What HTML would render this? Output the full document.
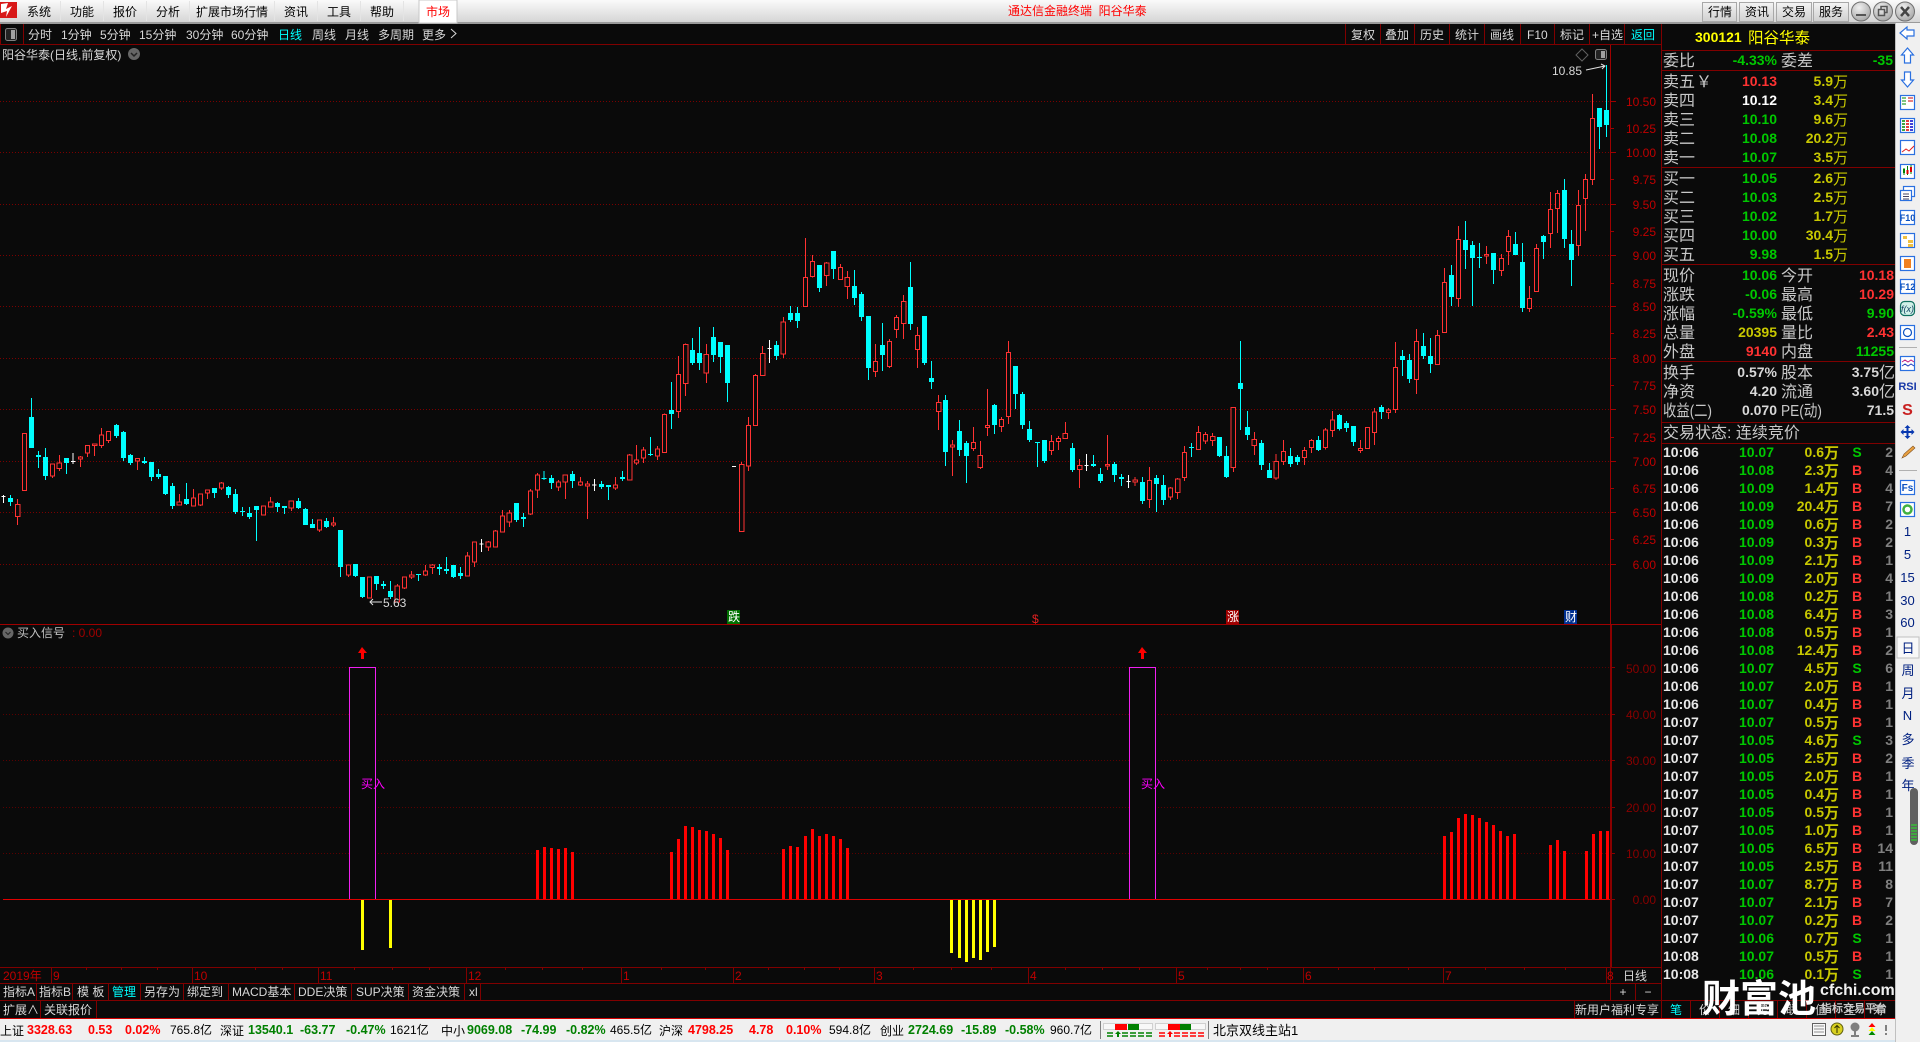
<!DOCTYPE html>
<html><head><meta charset="utf-8"><title>阳谷华泰</title>
<style>
html,body{margin:0;padding:0;background:#0a0a0a;overflow:hidden;width:1920px;height:1042px}
svg{display:block;position:absolute;left:0;top:0}
text{font-family:"Liberation Sans","WenQuanYi Zen Hei","Noto Sans CJK SC",sans-serif;font-size:12px;white-space:pre}
.c{font-size:12px;fill:#d8d8d8}
.b{font-size:12px;fill:#000}
.l{font-size:16px;fill:#c8c8c8}
.n{font-size:14px;font-weight:bold}
.p{font-size:12px;fill:#c00000;text-anchor:end}
.q{font-size:12px;fill:#8a0000;text-anchor:end}
.g{fill:#00c800}.r{fill:#ff3232}.y{fill:#c8c800}.w{fill:#e8e8e8}.s{fill:#808080}
.e{text-anchor:end}.m{text-anchor:middle}
.w2{font-size:15px;fill:#c8c800}
.rb{font-size:12.5px;font-weight:bold;fill:#f00}.gb{font-size:12.5px;font-weight:bold;fill:#008000}
.i{font-size:13px;fill:#002080;text-anchor:middle}
.cd{shape-rendering:crispEdges;fill:none}
.cd path{vector-effect:non-scaling-stroke}
</style></head><body>
<svg width="1920" height="1042" viewBox="0 0 1920 1042">
<defs>
<linearGradient id="tb" x1="0" y1="0" x2="0" y2="1"><stop offset="0" stop-color="#fafafa"/><stop offset="1" stop-color="#d4d4d4"/></linearGradient>
<linearGradient id="bt" x1="0" y1="0" x2="0" y2="1"><stop offset="0" stop-color="#f4f4f4"/><stop offset="1" stop-color="#cfcfcf"/></linearGradient>
<radialGradient id="ci" cx=".4" cy=".3" r=".8"><stop offset="0" stop-color="#f0f0f0"/><stop offset="1" stop-color="#a0a0a0"/></radialGradient>
</defs>
<rect width="1920" height="1042" fill="#0a0a0a"/>

<!-- top menu bar -->
<rect x="0" y="0" width="1920" height="23" fill="url(#tb)"/>
<rect x="0" y="22" width="1920" height="2" fill="#9a9a9a"/>
<path d="M60.500 1V21M103.500 1V21M146.500 1V21M189.500 1V21M274.500 1V21M317.500 1V21M360.500 1V21M403.500 1V21" stroke="#e4e4e4" shape-rendering="crispEdges"/>
<rect x="0" y="2" width="17" height="16" fill="#d81818"/>
<path d="M1 4L8 3L6 9L12 6L6 17L7 11L1 13Z" fill="#fff"/>
<g class="tm">
<text x="27" y="16" class="b">系统</text><text x="70" y="16" class="b">功能</text><text x="113" y="16" class="b">报价</text><text x="156" y="16" class="b">分析</text><text x="196" y="16" class="b">扩展市场行情</text><text x="284" y="16" class="b">资讯</text><text x="327" y="16" class="b">工具</text><text x="370" y="16" class="b">帮助</text>
</g>
<rect x="419" y="0" width="38" height="23" fill="#fff" stroke="#c8c8c8"/>
<text x="426" y="16" style="fill:#f00">市场</text>
<text x="1008" y="15" style="fill:#f00">通达信金融终端  阳谷华泰</text>
<g fill="url(#bt)" stroke="#a8a8a8"><rect x="1702.500" y="2.500" width="34" height="19"/><rect x="1739.500" y="2.500" width="34" height="19"/><rect x="1776.500" y="2.500" width="35" height="19"/><rect x="1813.500" y="2.500" width="35" height="19"/></g>
<text x="1708" y="16" class="b">行情</text><text x="1745" y="16" class="b">资讯</text><text x="1782" y="16" class="b">交易</text><text x="1819" y="16" class="b">服务</text>
<g fill="url(#ci)" stroke="#707070"><circle cx="1861" cy="11.500" r="9.500"/><circle cx="1883" cy="11.500" r="9.500"/><circle cx="1905" cy="11.500" r="9.500"/></g>
<path d="M1856 15h10" stroke="#555" stroke-width="2"/>
<path d="M1878.500 9.500h6v6h-6zM1881 9.500v-3h6v6h-2" stroke="#555" fill="none" stroke-width="1.500"/>
<path d="M1901 7l8 9M1909 7l-8 9" stroke="#444" stroke-width="2.500"/>

<!-- toolbar -->
<g stroke="#800000" fill="none" shape-rendering="crispEdges">
<path d="M0 44.500H1662M0.500 24V44M23.500 24V44"/>
<path d="M1345.500 24V44M1380.500 24V44M1414.500 24V44M1449.500 24V44M1484.500 24V44M1520.500 24V44M1554.500 24V44M1589.500 24V44M1624.500 24V44M1661.500 24V1018" />
</g>
<rect x="5.500" y="28.500" width="11" height="12" rx="2" fill="#222" stroke="#808080"/><rect x="11" y="30" width="4" height="9" fill="#a0a0a0"/>
<text x="28" y="39" class="c">分时</text><text x="61" y="39" class="c">1分钟</text><text x="100" y="39" class="c">5分钟</text><text x="139" y="39" class="c">15分钟</text><text x="186" y="39" class="c">30分钟</text><text x="231" y="39" class="c">60分钟</text>
<text x="278" y="39" style="fill:#0ff">日线</text><text x="312" y="39" class="c">周线</text><text x="345" y="39" class="c">月线</text><text x="378" y="39" class="c">多周期</text><text x="422" y="39" class="c">更多</text>
<path d="M451 35l5 4.500-5 4.500" transform="translate(0,-6)" stroke="#d8d8d8" fill="none"/>
<text x="1351" y="39" class="c">复权</text><text x="1385" y="39" class="c">叠加</text><text x="1420" y="39" class="c">历史</text><text x="1455" y="39" class="c">统计</text><text x="1490" y="39" class="c">画线</text><text x="1527" y="39" class="c">F10</text><text x="1560" y="39" class="c">标记</text><text x="1592" y="39" class="c">+自选</text><text x="1631" y="39" style="fill:#0ff">返回</text>
<text x="2" y="59" class="c">阳谷华泰(日线,前复权)</text>
<circle cx="134" cy="54" r="6" fill="#666"/><path d="M131 53l3 3 3-3" stroke="#222" fill="none" stroke-width="1.500"/>

<!-- grid upper -->
<g stroke="#7a0000" stroke-dasharray="1 2" shape-rendering="crispEdges">
<path d="M0 101.500H1610M0 152.500H1610M0 204.500H1610M0 255.500H1610M0 306.500H1610M0 358.500H1610M0 409.500H1610M0 461.500H1610M0 512.500H1610M0 564.500H1610"/>
</g>
<g stroke="#a00000" shape-rendering="crispEdges">
<path d="M1610.500 45V625" />
<path d="M1610 101.500h6M1610 128.500h4M1610 152.500h6M1610 179.500h4M1610 204.500h6M1610 231.500h4M1610 255.500h6M1610 283.500h4M1610 306.500h6M1610 333.500h4M1610 358.500h6M1610 385.500h4M1610 409.500h6M1610 437.500h4M1610 461.500h6M1610 488.500h4M1610 512.500h6M1610 539.500h4M1610 564.500h6"/>
</g>
<text x="1656" y="106" class="p">10.50</text><text x="1656" y="133" class="p">10.25</text><text x="1656" y="157" class="p">10.00</text><text x="1656" y="184" class="p">9.75</text><text x="1656" y="209" class="p">9.50</text><text x="1656" y="236" class="p">9.25</text><text x="1656" y="260" class="p">9.00</text><text x="1656" y="288" class="p">8.75</text><text x="1656" y="311" class="p">8.50</text><text x="1656" y="338" class="p">8.25</text><text x="1656" y="363" class="p">8.00</text><text x="1656" y="390" class="p">7.75</text><text x="1656" y="414" class="p">7.50</text><text x="1656" y="442" class="p">7.25</text><text x="1656" y="466" class="p">7.00</text><text x="1656" y="493" class="p">6.75</text><text x="1656" y="517" class="p">6.50</text><text x="1656" y="544" class="p">6.25</text><text x="1656" y="569" class="p">6.00</text>

<!-- candles left -->
<g class="cd" transform="translate(0,400) scale(.42092,.33333)">
<path stroke="#0ff" stroke-width="1" d="M25,285V318M75,-6V144M91,153V204M108,144V240M158,174V222M277,72V114M293,93V183M310,162V195M343,171V192M360,186V243M376,207V237M393,228V285M410,249V327M443,249V315M510,264V294M543,258V294M560,267V342M576,321V348M593,321V357M609,318V423M659,306V336M676,318V342M709,294V327M726,324V375M742,357V384M776,354V384M809,390V531M845,492V531M861,531V594M895,528V570M911,543V567M928,543V597M994,522V543M1044,492V525M1061,471V522M1077,495V534M1094,501V537M1227,309V366M1244,339V381M1293,213V240M1310,225V267M1360,213V264M1429,243V267M1446,255V300M1479,213V243M1546,111V168"/>
<path stroke="#0ff" stroke-width="5" d="M25,294V306M75,51V144M91,165V171M108,171V228M158,174V189M277,75V108M293,96V174M310,165V189M343,183V189M360,186V231M376,222V231M393,228V282M410,258V318M443,297V312M510,264V279M543,261V285M560,282V336M576,333V336M593,339V351M609,318V330M659,309V321M676,318V324M709,303V324M726,327V375M742,372V384M776,363V381M809,390V501M845,492V528M861,531V591M895,528V552M911,552V558M928,573V591M994,522V525M1044,501V507M1061,507V513M1077,495V531M1094,519V528M1227,309V360M1244,351V357M1293,234V237M1310,234V249M1360,222V243M1429,252V261M1446,255V261M1479,231V237M1546,162V165"/>
<path stroke="#ff3232" stroke-width="1" d="M42,297V375M125,192V234M141,165V213M191,168V201M208,136V171M225,132V168M241,84V144M258,94V129M327,175V210M426,282V315M460,267V318M476,282V318M493,270V297M526,246V270M643,291V321M692,303V333M759,360V396M792,351V381M828,495V531M944,552V606M961,531V567M978,513V537M1011,495V528M1027,492V522M1111,456V528M1127,426V501M1160,423V453M1177,390V441M1194,330V396M1210,330V381M1260,267V345M1277,219V294M1327,240V273M1343,225V297M1379,231V258M1396,243V357M1462,231V270M1496,162V240M1512,135V195M1529,141V189M1562,138V180"/>
<path stroke="#ff3232" stroke-width="1" fill="#0a0a0a" d="M37,313h10V350h-10zM53,100h10V272h-10zM120,192h10V228h-10zM136,189h10V206h-10zM186,171h10V177h-10zM203,136h10V159h-10zM220,132h10V137h-10zM236,105h10V137h-10zM253,94h10V122h-10zM322,175h10V183h-10zM421,306h10V315h-10zM455,294h10V318h-10zM471,282h10V315h-10zM488,270h10V279h-10zM521,249h10V264h-10zM621,318h10V345h-10zM638,306h10V321h-10zM687,303h10V324h-10zM754,360h10V390h-10zM787,369h10V375h-10zM823,495h10V525h-10zM873,531h10V594h-10zM939,558h10V606h-10zM956,531h10V564h-10zM973,525h10V531h-10zM1006,513h10V525h-10zM1022,495h10V503h-10zM1106,468h10V528h-10zM1122,426h10V486h-10zM1155,426h10V441h-10zM1172,393h10V441h-10zM1189,348h10V396h-10zM1205,339h10V366h-10zM1255,273h10V342h-10zM1272,225h10V270h-10zM1322,246h10V261h-10zM1338,225h10V246h-10zM1374,246h10V255h-10zM1391,252h10V258h-10zM1457,255h10V264h-10zM1491,165h10V240h-10zM1507,180h10V189h-10zM1524,150h10V174h-10zM1557,147h10V168h-10z"/>
<path stroke="#fff" stroke-width="1" d="M8,285V309M3,289h10M174,159V192M169,184h10M1144,417V456M1139,432h10M1412,237V273M1407,255h10"/>
</g>
<!-- candles middle -->
<g class="cd" transform="translate(660,220) scale(.42092,.33333)">
<path stroke="#0ff" stroke-width="1" d="M27,486V627M77,354V435M94,321V450M127,321V426M144,366V459M160,375V546M277,363V420M310,258V306M327,261V324M379,135V216M412,93V177M462,150V255M479,216V303M495,288V480M529,309V453M595,126V330M628,288V435M645,423V507M678,525V738M711,600V708M728,663V789M795,552V642M845,438V567M861,516V627M878,603V666M897,666V741M913,660V729M980,669V756M1030,705V741M1046,744V789M1080,726V786M1096,762V798M1146,771V852M1180,765V876M1196,765V855M1263,669V711M1329,651V711M1346,678V774M1379,363V630M1396,573V660M1429,660V750M1448,729V774M1498,684V741M1514,705V735M1565,648V693"/>
<path stroke="#0ff" stroke-width="5" d="M27,570V582M77,390V429M94,399V429M127,351V405M144,366V411M160,375V489M277,375V408M310,279V300M327,279V303M379,135V204M412,93V147M462,198V234M479,222V291M495,288V444M529,375V405M595,201V312M628,288V429M645,474V486M678,540V696M711,633V690M728,669V708M795,555V615M845,438V522M861,522V615M878,627V660M897,666V669M913,660V723M980,684V750M1030,732V738M1046,762V783M1080,732V765M1096,771V777M1146,786V843M1180,774V792M1196,795V840M1263,681V684M1329,651V708M1346,708V771M1379,489V507M1396,621V645M1429,669V735M1448,750V774M1498,708V732M1514,711V726M1565,660V690"/>
<path stroke="#ff3232" stroke-width="1" d="M11,580V698M44,408V594M61,370V528M110,372V489M194,726V934M210,591V753M227,462V617M244,378V467M293,291V414M346,54V260M362,105V173M396,126V198M429,132V179M445,153V237M512,372V471M545,357V444M562,285V354M579,225V357M612,321V444M662,525V630M695,660V768M745,621V693M761,663V747M778,507V648M811,591V636M828,363V612M930,645V705M947,648V690M963,606V656M997,717V804M1063,645V750M1129,771V798M1163,741V864M1213,801V840M1230,774V837M1246,678V783M1279,618V689M1296,636V672M1313,639V678M1362,562V756M1412,636V705M1464,702V780M1481,660V735M1531,681V735M1548,657V699"/>
<path stroke="#ff3232" stroke-width="1" fill="#0a0a0a" d="M6,583h10V698h-10zM39,463h10V575h-10zM56,373h10V491h-10zM105,403h10V459h-10zM189,733h10V934h-10zM205,616h10V738h-10zM222,466h10V617h-10zM239,400h10V467h-10zM288,306h10V402h-10zM341,172h10V260h-10zM357,124h10V170h-10zM391,129h10V166h-10zM424,142h10V179h-10zM440,172h10V200h-10zM507,424h10V455h-10zM540,364h10V440h-10zM557,292h10V329h-10zM574,244h10V311h-10zM607,346h10V389h-10zM657,547h10V575h-10zM690,675h10V681h-10zM740,667h10V686h-10zM756,706h10V743h-10zM773,616h10V623h-10zM806,598h10V620h-10zM823,397h10V590h-10zM925,664h10V692h-10zM942,655h10V665h-10zM958,640h10V656h-10zM992,736h10V749h-10zM1058,733h10V738h-10zM1124,780h10V786h-10zM1158,781h10V839h-10zM1208,804h10V831h-10zM1225,777h10V818h-10zM1241,697h10V773h-10zM1274,637h10V689h-10zM1291,643h10V663h-10zM1308,649h10V662h-10zM1357,562h10V743h-10zM1407,658h10V677h-10zM1459,724h10V774h-10zM1476,694h10V725h-10zM1526,691h10V713h-10zM1543,661h10V683h-10z"/>
<path stroke="#fff" stroke-width="1" d="M171,739h10M260,360V429M255,385h10M1013,702V753M1008,736h10M1113,765V804M1108,784h10"/>
</g>
<!-- candles right -->
<g class="cd" transform="translate(1320,40) scale(.33333)">
<path stroke="#0ff" stroke-width="1" d="M58,1122V1172M79,1143V1176M100,1158V1218M184,1095V1137M247,930V1008M268,942V1029M310,879V957M331,894V999M394,675V798M436,543V687M457,603V798M478,609V684M520,639V732M586,576V645M607,609V816M670,585V657M733,417V624M754,570V738M838,204V327M859,75V291"/>
<path stroke="#0ff" stroke-width="5" d="M58,1125V1167M79,1149V1164M100,1158V1206M184,1101V1116M247,948V960M268,960V1017M310,918V948M331,948V972M394,705V771M436,600V630M457,615V654M478,651V654M520,639V690M586,612V645M607,666V804M670,588V606M733,450V597M754,612V660M838,204V261M859,210V255"/>
<path stroke="#ff3232" stroke-width="1" d="M16,1164V1228M37,1113V1191M121,1200V1239M163,1104V1215M205,1104V1137M226,906V1119M289,867V1062M352,870V974M373,684V878M415,558V801M499,618V672M544,642V708M565,570V675M628,738V816M649,612V755M691,456V624M712,450V579M775,450V648M796,402V573M817,162V435"/>
<path stroke="#ff3232" stroke-width="1" fill="#0a0a0a" d="M10,1170h12V1223h-12zM31,1140h12V1172h-12zM115,1225h12V1232h-12zM136,1162h12V1226h-12zM157,1116h12V1178h-12zM199,1110h12V1118h-12zM220,982h12V1109h-12zM283,904h12V1019h-12zM346,886h12V974h-12zM367,727h12V878h-12zM409,598h12V776h-12zM493,643h12V648h-12zM538,655h12V692h-12zM559,589h12V635h-12zM622,775h12V806h-12zM643,625h12V755h-12zM685,508h12V581h-12zM706,460h12V506h-12zM769,496h12V617h-12zM790,418h12V476h-12zM811,235h12V418h-12z"/>
</g>
<!-- chart annotations -->
<path d="M1582 49l6 6-6 6-6-6z" fill="none" stroke="#606060"/>
<rect x="1595.500" y="49.500" width="11" height="10" rx="2" fill="#222" stroke="#808080"/><rect x="1601" y="51" width="4" height="7" fill="#a0a0a0"/>
<text x="1552" y="75" style="fill:#d8d8d8">10.85</text>
<path d="M1586 70L1605 66M1601 64l4 2-3 3" stroke="#e0e0e0" fill="none"/>
<path d="M382 602H370M373 599l-3 3 3 3" stroke="#e0e0e0" fill="none"/>
<text x="383" y="607" style="fill:#d8d8d8">5.63</text>
<!-- signals -->
<rect x="727" y="610" width="13" height="14" fill="#007000"/><text x="728" y="621" style="fill:#fff">跌</text>
<text x="1032" y="623" style="fill:#e02020">$</text>
<rect x="1226" y="610" width="13" height="14" fill="#a00000"/><text x="1227" y="621" style="fill:#fff">涨</text>
<rect x="1564" y="610" width="13" height="14" fill="#003090"/><text x="1565" y="621" style="fill:#fff">财</text>

<!-- divider & indicator panel -->
<rect x="0" y="624" width="1661" height="1" fill="#a00000"/>
<circle cx="8" cy="633" r="5.500" fill="#666"/><path d="M5.500 632l2.500 2.500 2.500-2.500" stroke="#222" fill="none"/>
<text x="17" y="637" class="c" style="fill:#c0c0c0">买入信号</text><text x="72" y="637" style="fill:#a00000">: 0.00</text>
<g stroke="#5a0000" stroke-dasharray="1 2" shape-rendering="crispEdges"><path d="M3 667.500H1610M3 714.500H1610M3 760.500H1610M3 807.500H1610M3 853.500H1610"/></g>
<rect x="1610" y="625" width="2" height="342" fill="#8a0000"/>
<g stroke="#8a0000" shape-rendering="crispEdges"><path d="M1610 667.500h5M1610 714.500h5M1610 760.500h5M1610 807.500h5M1610 853.500h5M1610 899.500h5"/></g>
<text x="1656" y="673" class="q">50.00</text><text x="1656" y="719" class="q">40.00</text><text x="1656" y="765" class="q">30.00</text><text x="1656" y="812" class="q">20.00</text><text x="1656" y="858" class="q">10.00</text><text x="1656" y="904" class="q">0.00</text>
<rect x="349.500" y="667.500" width="26" height="232" fill="#0a0a0a" stroke="#f020f0"/>
<rect x="1129.500" y="667.500" width="26" height="232" fill="#0a0a0a" stroke="#f020f0"/>
<text x="361" y="788" style="fill:#ff00ff">买入</text><text x="1141" y="788" style="fill:#ff00ff">买入</text>
<path d="M362 647l5 6h-3v6h-3v-6h-3z" fill="#f00"/><path d="M1142 647l5 6h-3v6h-3v-6h-3z" fill="#f00"/>
<rect x="3" y="899" width="1607" height="1" fill="#e00000"/>
<g stroke="#f00" stroke-width="3" shape-rendering="crispEdges">
<path d="M537.500 899V850M544.500 899V847M551.500 899V848M558.500 899V849M565.500 899V848M572.500 899V852"/>
<path d="M671.500 899V852M678.500 899V839M685.500 899V826M692.500 899V827M699.500 899V830M706.500 899V831M713.500 899V834M720.500 899V838M727.500 899V850"/>
<path d="M783.500 899V849M790.500 899V846M797.500 899V847M805.500 899V836M812.500 899V829M819.500 899V836M826.500 899V834M833.500 899V836M840.500 899V839M847.500 899V848"/>
<path d="M1444.500 899V836M1451.500 899V832M1458.500 899V818M1465.500 899V814M1472.500 899V815M1479.500 899V818M1486.500 899V822M1493.500 899V825M1500.500 899V831M1507.500 899V836M1514.500 899V834"/>
<path d="M1550.500 899V845M1557.500 899V840M1564.500 899V851M1586.500 899V851M1593.500 899V834M1600.500 899V831M1607.500 899V831"/>
</g>
<g stroke="#ff0" stroke-width="3" shape-rendering="crispEdges">
<path d="M362.500 900V950M390.500 900V948M951.500 900V953M959.500 900V958M966.500 900V962M973.500 900V958M980.500 900V960M987.500 900V952M994.500 900V947"/>
</g>

<!-- time axis -->
<g stroke="#800000" shape-rendering="crispEdges" fill="none">
<path d="M0 967.500H1662M0 983.500H1662M0 1000.500H1662"/>
<path d="M51.500 967V983M192.500 967V983M318.500 967V983M466.500 967V983M621.500 967V983M733.500 967V983M874.500 967V983M1028.500 967V983M1176.500 967V983M1303.500 967V983M1443.500 967V983M1606.500 967V983M1610.500 967V1000"/>
<path d="M86.500 967v3M121.500 967v3M157.500 967v3M255.500 967v3M282.500 967v3M354.500 967v3M392.500 967v3M429.500 967v3M505.500 967v3M542.500 967v3M582.500 967v3M661.500 967v3M705.500 967v3M768.500 967v3M804.500 967v3M839.500 967v3M913.500 967v3M951.500 967v3M991.500 967v3M1065.500 967v3M1102.500 967v3M1139.500 967v3M1207.500 967v3M1240.500 967v3M1267.500 967v3M1338.500 967v3M1374.500 967v3M1408.500 967v3M1485.500 967v3M1524.500 967v3M1565.500 967v3"/>
<path d="M1635.500 983V1000"/>
<path d="M36.500 983V1000M72.500 983V1000M108.500 983V1000M140.500 983V1000M183.500 983V1000M228.500 983V1000M294.500 983V1000M351.500 983V1000M408.500 983V1000M464.500 983V1000M480.500 983V1000"/>
<path d="M40.500 1000V1018M96.500 1000V1018M1574.500 1000V1018"/>
</g>
<text x="3" y="980" style="fill:#c00000">2019年</text><text x="53" y="980" style="fill:#c00000">9</text><text x="194" y="980" style="fill:#c00000">10</text><text x="320" y="980" style="fill:#c00000">11</text><text x="468" y="980" style="fill:#c00000">12</text><text x="623" y="980" style="fill:#c00000">1</text><text x="735" y="980" style="fill:#c00000">2</text><text x="876" y="980" style="fill:#c00000">3</text><text x="1030" y="980" style="fill:#c00000">4</text><text x="1178" y="980" style="fill:#c00000">5</text><text x="1305" y="980" style="fill:#c00000">6</text><text x="1445" y="980" style="fill:#c00000">7</text><text x="1607" y="980" style="fill:#c00000">8</text>
<text x="1623" y="980" class="c">日线</text>
<text x="1623" y="996" class="c m">+</text><text x="1648" y="996" class="c m">−</text>
<text x="3" y="996" class="c">指标A</text><text x="39" y="996" class="c">指标B</text><text x="77" y="996" class="c">模 板</text><text x="112" y="996" style="fill:#0ff">管理</text><text x="144" y="996" class="c">另存为</text><text x="187" y="996" class="c">绑定到</text><text x="232" y="996" class="c">MACD基本</text><text x="298" y="996" class="c">DDE决策</text><text x="356" y="996" class="c">SUP决策</text><text x="412" y="996" class="c">资金决策</text><text x="469" y="996" class="c">xl</text>
<text x="3" y="1014" class="c">扩展∧</text><text x="44" y="1014" class="c">关联报价</text>
<text x="1575" y="1014" class="c">新用户福利专享</text>

<!-- right panel -->
<rect x="1662" y="24" width="233" height="994" fill="#0a0a0a"/>
<g stroke="#800000" shape-rendering="crispEdges">
<path d="M1661.500 24V1018"/>
<path d="M1662 50.500H1895M1662 70.500H1895M1662 167.500H1895M1662 264.500H1895M1662 361.500H1895M1662 422.500H1895M1662 443.500H1895"/>
<path d="M1662 1000.500H1895M1690.500 1000V1018M1719.500 1000V1018M1748.500 1000V1018M1777.500 1000V1018M1806.500 1000V1018M1835.500 1000V1018M1864.500 1000V1018"/>
</g>
<text x="1670" y="1014" style="fill:#0ff">笔</text><text x="1699" y="1014" class="c">价</text><text x="1728" y="1014" class="c">细</text><text x="1757" y="1014" class="c">势</text><text x="1786" y="1014" class="c">联</text><text x="1815" y="1014" class="c">值</text><text x="1844" y="1014" class="c">主</text><text x="1873" y="1014" class="c">筹</text>
<text x="1695" y="42" style="font-size:14px;font-weight:bold;fill:#ff0">300121</text>
<text x="1748" y="43" style="font-size:15.500px;fill:#ff0">阳谷华泰</text>
<text x="1663" y="66" class="l">委比</text><text x="1777" y="65" class="n g e">-4.33%</text><text x="1781" y="66" class="l">委差</text><text x="1893" y="65" class="n g e">-35</text>

<text x="1663" y="87" class="l">卖五</text><text x="1696" y="87" class="l">￥</text><text x="1777" y="86" class="n r e">10.13</text><text x="1833" y="86" class="n y e">5.9</text><text x="1833" y="87" class="w2">万</text>
<text x="1663" y="106" class="l">卖四</text><text x="1777" y="105" class="n e" style="fill:#fff">10.12</text><text x="1833" y="105" class="n y e">3.4</text><text x="1833" y="106" class="w2">万</text>
<text x="1663" y="125" class="l">卖三</text><text x="1777" y="124" class="n g e">10.10</text><text x="1833" y="124" class="n y e">9.6</text><text x="1833" y="125" class="w2">万</text>
<text x="1663" y="144" class="l">卖二</text><text x="1777" y="143" class="n g e">10.08</text><text x="1833" y="143" class="n y e">20.2</text><text x="1833" y="144" class="w2">万</text>
<text x="1663" y="163" class="l">卖一</text><text x="1777" y="162" class="n g e">10.07</text><text x="1833" y="162" class="n y e">3.5</text><text x="1833" y="163" class="w2">万</text>
<text x="1663" y="184" class="l">买一</text><text x="1777" y="183" class="n g e">10.05</text><text x="1833" y="183" class="n y e">2.6</text><text x="1833" y="184" class="w2">万</text>
<text x="1663" y="203" class="l">买二</text><text x="1777" y="202" class="n g e">10.03</text><text x="1833" y="202" class="n y e">2.5</text><text x="1833" y="203" class="w2">万</text>
<text x="1663" y="222" class="l">买三</text><text x="1777" y="221" class="n g e">10.02</text><text x="1833" y="221" class="n y e">1.7</text><text x="1833" y="222" class="w2">万</text>
<text x="1663" y="241" class="l">买四</text><text x="1777" y="240" class="n g e">10.00</text><text x="1833" y="240" class="n y e">30.4</text><text x="1833" y="241" class="w2">万</text>
<text x="1663" y="260" class="l">买五</text><text x="1777" y="259" class="n g e">9.98</text><text x="1833" y="259" class="n y e">1.5</text><text x="1833" y="260" class="w2">万</text>

<text x="1663" y="281" class="l">现价</text><text x="1777" y="280" class="n g e">10.06</text><text x="1781" y="281" class="l">今开</text><text x="1894" y="280" class="n r e">10.18</text>
<text x="1663" y="300" class="l">涨跌</text><text x="1777" y="299" class="n g e">-0.06</text><text x="1781" y="300" class="l">最高</text><text x="1894" y="299" class="n r e">10.29</text>
<text x="1663" y="319" class="l">涨幅</text><text x="1777" y="318" class="n g e">-0.59%</text><text x="1781" y="319" class="l">最低</text><text x="1894" y="318" class="n g e">9.90</text>
<text x="1663" y="338" class="l">总量</text><text x="1777" y="337" class="n y e">20395</text><text x="1781" y="338" class="l">量比</text><text x="1894" y="337" class="n r e">2.43</text>
<text x="1663" y="357" class="l">外盘</text><text x="1777" y="356" class="n r e">9140</text><text x="1781" y="357" class="l">内盘</text><text x="1894" y="356" class="n g e">11255</text>

<text x="1663" y="378" class="l">换手</text><text x="1777" y="377" class="n e" style="fill:#d8d8d8">0.57%</text><text x="1781" y="378" class="l">股本</text><text x="1879" y="377" class="n e" style="fill:#d8d8d8">3.75</text><text x="1879" y="378" class="l">亿</text>
<text x="1663" y="397" class="l">净资</text><text x="1777" y="396" class="n e" style="fill:#d8d8d8">4.20</text><text x="1781" y="397" class="l">流通</text><text x="1879" y="396" class="n e" style="fill:#d8d8d8">3.60</text><text x="1879" y="397" class="l">亿</text>
<text x="1663" y="416" class="l" textLength="49" lengthAdjust="spacingAndGlyphs">收益(二)</text><text x="1777" y="415" class="n e" style="fill:#d8d8d8">0.070</text><text x="1781" y="416" class="l" textLength="41" lengthAdjust="spacingAndGlyphs">PE(动)</text><text x="1894" y="415" class="n e" style="fill:#d8d8d8">71.5</text>
<text x="1663" y="438" class="l">交易状态: 连续竞价</text>

<!-- ticks -->
<g class="n">
<text x="1663" y="457" class="n w">10:06</text><text x="1774" y="457" class="n g e">10.07</text><text x="1824" y="457" class="n y e">0.6</text><text x="1824" y="458" class="w2">万</text><text x="1857" y="457" class="n g m">S</text><text x="1893" y="457" class="n s e">2</text>
<text x="1663" y="475" class="n w">10:06</text><text x="1774" y="475" class="n g e">10.08</text><text x="1824" y="475" class="n y e">2.3</text><text x="1824" y="476" class="w2">万</text><text x="1857" y="475" class="n r m">B</text><text x="1893" y="475" class="n s e">4</text>
<text x="1663" y="493" class="n w">10:06</text><text x="1774" y="493" class="n g e">10.09</text><text x="1824" y="493" class="n y e">1.4</text><text x="1824" y="494" class="w2">万</text><text x="1857" y="493" class="n r m">B</text><text x="1893" y="493" class="n s e">4</text>
<text x="1663" y="511" class="n w">10:06</text><text x="1774" y="511" class="n g e">10.09</text><text x="1824" y="511" class="n y e">20.4</text><text x="1824" y="512" class="w2">万</text><text x="1857" y="511" class="n r m">B</text><text x="1893" y="511" class="n s e">7</text>
<text x="1663" y="529" class="n w">10:06</text><text x="1774" y="529" class="n g e">10.09</text><text x="1824" y="529" class="n y e">0.6</text><text x="1824" y="530" class="w2">万</text><text x="1857" y="529" class="n r m">B</text><text x="1893" y="529" class="n s e">2</text>
<text x="1663" y="547" class="n w">10:06</text><text x="1774" y="547" class="n g e">10.09</text><text x="1824" y="547" class="n y e">0.3</text><text x="1824" y="548" class="w2">万</text><text x="1857" y="547" class="n r m">B</text><text x="1893" y="547" class="n s e">2</text>
<text x="1663" y="565" class="n w">10:06</text><text x="1774" y="565" class="n g e">10.09</text><text x="1824" y="565" class="n y e">2.1</text><text x="1824" y="566" class="w2">万</text><text x="1857" y="565" class="n r m">B</text><text x="1893" y="565" class="n s e">1</text>
<text x="1663" y="583" class="n w">10:06</text><text x="1774" y="583" class="n g e">10.09</text><text x="1824" y="583" class="n y e">2.0</text><text x="1824" y="584" class="w2">万</text><text x="1857" y="583" class="n r m">B</text><text x="1893" y="583" class="n s e">4</text>
<text x="1663" y="601" class="n w">10:06</text><text x="1774" y="601" class="n g e">10.08</text><text x="1824" y="601" class="n y e">0.2</text><text x="1824" y="602" class="w2">万</text><text x="1857" y="601" class="n r m">B</text><text x="1893" y="601" class="n s e">1</text>
<text x="1663" y="619" class="n w">10:06</text><text x="1774" y="619" class="n g e">10.08</text><text x="1824" y="619" class="n y e">6.4</text><text x="1824" y="620" class="w2">万</text><text x="1857" y="619" class="n r m">B</text><text x="1893" y="619" class="n s e">3</text>
<text x="1663" y="637" class="n w">10:06</text><text x="1774" y="637" class="n g e">10.08</text><text x="1824" y="637" class="n y e">0.5</text><text x="1824" y="638" class="w2">万</text><text x="1857" y="637" class="n r m">B</text><text x="1893" y="637" class="n s e">1</text>
<text x="1663" y="655" class="n w">10:06</text><text x="1774" y="655" class="n g e">10.08</text><text x="1824" y="655" class="n y e">12.4</text><text x="1824" y="656" class="w2">万</text><text x="1857" y="655" class="n r m">B</text><text x="1893" y="655" class="n s e">2</text>
<text x="1663" y="673" class="n w">10:06</text><text x="1774" y="673" class="n g e">10.07</text><text x="1824" y="673" class="n y e">4.5</text><text x="1824" y="674" class="w2">万</text><text x="1857" y="673" class="n g m">S</text><text x="1893" y="673" class="n s e">6</text>
<text x="1663" y="691" class="n w">10:06</text><text x="1774" y="691" class="n g e">10.07</text><text x="1824" y="691" class="n y e">2.0</text><text x="1824" y="692" class="w2">万</text><text x="1857" y="691" class="n r m">B</text><text x="1893" y="691" class="n s e">1</text>
<text x="1663" y="709" class="n w">10:06</text><text x="1774" y="709" class="n g e">10.07</text><text x="1824" y="709" class="n y e">0.4</text><text x="1824" y="710" class="w2">万</text><text x="1857" y="709" class="n r m">B</text><text x="1893" y="709" class="n s e">1</text>
<text x="1663" y="727" class="n w">10:07</text><text x="1774" y="727" class="n g e">10.07</text><text x="1824" y="727" class="n y e">0.5</text><text x="1824" y="728" class="w2">万</text><text x="1857" y="727" class="n r m">B</text><text x="1893" y="727" class="n s e">1</text>
<text x="1663" y="745" class="n w">10:07</text><text x="1774" y="745" class="n g e">10.05</text><text x="1824" y="745" class="n y e">4.6</text><text x="1824" y="746" class="w2">万</text><text x="1857" y="745" class="n g m">S</text><text x="1893" y="745" class="n s e">3</text>
<text x="1663" y="763" class="n w">10:07</text><text x="1774" y="763" class="n g e">10.05</text><text x="1824" y="763" class="n y e">2.5</text><text x="1824" y="764" class="w2">万</text><text x="1857" y="763" class="n r m">B</text><text x="1893" y="763" class="n s e">2</text>
<text x="1663" y="781" class="n w">10:07</text><text x="1774" y="781" class="n g e">10.05</text><text x="1824" y="781" class="n y e">2.0</text><text x="1824" y="782" class="w2">万</text><text x="1857" y="781" class="n r m">B</text><text x="1893" y="781" class="n s e">1</text>
<text x="1663" y="799" class="n w">10:07</text><text x="1774" y="799" class="n g e">10.05</text><text x="1824" y="799" class="n y e">0.4</text><text x="1824" y="800" class="w2">万</text><text x="1857" y="799" class="n r m">B</text><text x="1893" y="799" class="n s e">1</text>
<text x="1663" y="817" class="n w">10:07</text><text x="1774" y="817" class="n g e">10.05</text><text x="1824" y="817" class="n y e">0.5</text><text x="1824" y="818" class="w2">万</text><text x="1857" y="817" class="n r m">B</text><text x="1893" y="817" class="n s e">1</text>
<text x="1663" y="835" class="n w">10:07</text><text x="1774" y="835" class="n g e">10.05</text><text x="1824" y="835" class="n y e">1.0</text><text x="1824" y="836" class="w2">万</text><text x="1857" y="835" class="n r m">B</text><text x="1893" y="835" class="n s e">1</text>
<text x="1663" y="853" class="n w">10:07</text><text x="1774" y="853" class="n g e">10.05</text><text x="1824" y="853" class="n y e">6.5</text><text x="1824" y="854" class="w2">万</text><text x="1857" y="853" class="n r m">B</text><text x="1893" y="853" class="n s e">14</text>
<text x="1663" y="871" class="n w">10:07</text><text x="1774" y="871" class="n g e">10.05</text><text x="1824" y="871" class="n y e">2.5</text><text x="1824" y="872" class="w2">万</text><text x="1857" y="871" class="n r m">B</text><text x="1893" y="871" class="n s e">11</text>
<text x="1663" y="889" class="n w">10:07</text><text x="1774" y="889" class="n g e">10.07</text><text x="1824" y="889" class="n y e">8.7</text><text x="1824" y="890" class="w2">万</text><text x="1857" y="889" class="n r m">B</text><text x="1893" y="889" class="n s e">8</text>
<text x="1663" y="907" class="n w">10:07</text><text x="1774" y="907" class="n g e">10.07</text><text x="1824" y="907" class="n y e">2.1</text><text x="1824" y="908" class="w2">万</text><text x="1857" y="907" class="n r m">B</text><text x="1893" y="907" class="n s e">7</text>
<text x="1663" y="925" class="n w">10:07</text><text x="1774" y="925" class="n g e">10.07</text><text x="1824" y="925" class="n y e">0.2</text><text x="1824" y="926" class="w2">万</text><text x="1857" y="925" class="n r m">B</text><text x="1893" y="925" class="n s e">2</text>
<text x="1663" y="943" class="n w">10:07</text><text x="1774" y="943" class="n g e">10.06</text><text x="1824" y="943" class="n y e">0.7</text><text x="1824" y="944" class="w2">万</text><text x="1857" y="943" class="n g m">S</text><text x="1893" y="943" class="n s e">1</text>
<text x="1663" y="961" class="n w">10:08</text><text x="1774" y="961" class="n g e">10.07</text><text x="1824" y="961" class="n y e">0.5</text><text x="1824" y="962" class="w2">万</text><text x="1857" y="961" class="n r m">B</text><text x="1893" y="961" class="n s e">1</text>
<text x="1663" y="979" class="n w">10:08</text><text x="1774" y="979" class="n g e">10.06</text><text x="1824" y="979" class="n y e">0.1</text><text x="1824" y="980" class="w2">万</text><text x="1857" y="979" class="n g m">S</text><text x="1893" y="979" class="n s e">1</text>
</g>

<!-- watermark -->
<text x="1702" y="1012" style="font-size:38px;font-weight:bold;fill:#fff;font-family:'Noto Sans CJK SC',sans-serif">财富池</text>
<text x="1820" y="995" style="font-size:16px;font-weight:bold;fill:#f0f0f0">cfchi.com</text>
<text x="1821" y="1012" style="font-size:11px;font-weight:bold;fill:#c8c8c8">指标交易平台</text>

<!-- right icon bar -->
<rect x="1895" y="23" width="25" height="1019" fill="#f0f0f0"/>
<rect x="1895" y="23" width="1" height="1019" fill="#c0c0c0"/>
<g fill="#fff" stroke="#2a70e0" stroke-width="1.200">
<path d="M1900 33l7-6v3h7v6h-7v3z"/>
<path d="M1907.500 48l6 7h-3v8h-6v-8h-3z"/>
<path d="M1904.500 72h6v8h3l-6 7-6-7h3z"/>
<rect x="1900.500" y="95.500" width="14" height="14"/>
<rect x="1900.500" y="118.500" width="14" height="14"/>
<rect x="1900.500" y="140.500" width="14" height="14"/>
<rect x="1900.500" y="164.500" width="14" height="14"/>
<rect x="1903.500" y="186.500" width="11" height="10"/><rect x="1900.500" y="190.500" width="11" height="10"/>
<rect x="1900.500" y="210.500" width="14" height="14"/>
<rect x="1900.500" y="233.500" width="14" height="14"/>
<rect x="1900.500" y="256.500" width="14" height="14"/>
<rect x="1900.500" y="279.500" width="14" height="14"/>
<rect x="1900.500" y="325.500" width="14" height="14"/>
<rect x="1900.500" y="356.500" width="14" height="14"/>
<rect x="1900.500" y="480.500" width="14" height="14"/>
<rect x="1900.500" y="502.500" width="14" height="14"/>
</g>
<rect x="1900.500" y="301.500" width="14" height="14" rx="4" fill="#d0f0e8" stroke="#107060" stroke-width="1.200"/>
<path d="M1902 98h4M1902 101h4M1902 104h4" stroke="#080"/><path d="M1908 98h5M1908 101h5" stroke="#c00"/>
<path d="M1902 121h3M1902 124h3M1902 127h3M1902 130h3" stroke="#080" stroke-width="1.500"/><path d="M1906 121h3M1906 124h3M1906 127h3M1906 130h3" stroke="#d00" stroke-width="1.500"/><path d="M1910 121h3M1910 124h3M1910 127h3M1910 130h3" stroke="#00c" stroke-width="1.500"/>
<path d="M1902 152l4-3 3 2 5-5" stroke="#e02020" fill="none"/>
<path d="M1904 168v7M1907.500 166v9M1911 165v9" stroke="#008000"/><rect x="1903" y="169" width="2" height="4" fill="#008000"/><rect x="1906.500" y="170" width="2" height="4" fill="#d00"/><rect x="1910" y="167" width="2" height="5" fill="#d00"/>
<path d="M1903 194h6M1903 196.500h6M1903 199h6" stroke="#446"/>
<rect x="1903" y="236" width="4" height="3" fill="#f0c040"/><rect x="1908" y="240" width="5" height="3" fill="#f0c040"/><rect x="1908" y="244" width="5" height="3" fill="#f0c040"/>
<rect x="1904" y="259" width="7" height="9" fill="#f08020"/>
<text x="1907.500" y="221" class="i" style="font-size:9px;fill:#0a50c0;font-weight:bold">F10</text>
<text x="1907.500" y="290" class="i" style="font-size:9px;fill:#0a50c0;font-weight:bold">F12</text>
<text x="1907.500" y="312" class="i" style="font-size:9px;font-style:italic;fill:#104060">f(x)</text>
<circle cx="1907.500" cy="332.500" r="4" fill="none" stroke="#0a50c0" stroke-width="1.200"/>
<rect x="1899" y="347" width="18" height="1" fill="#b0b0b0"/>
<path d="M1902 362l3-2 3 2 3-2 3 2" stroke="#c02080" fill="none"/><path d="M1902 366l3-2 3 2 3-2 3 2" stroke="#2040c0" fill="none"/>
<text x="1907.500" y="390" class="i" style="font-size:11px;font-weight:bold;fill:#1838a8">RSI</text>
<text x="1907.500" y="415" class="i" style="font-size:16px;font-weight:bold;fill:#c82020">S</text>
<path d="M1907.500 425l3 3h-2v3h3v-2l3 3-3 3v-2h-3v3h2l-3 3-3-3h2v-3h-3v2l-3-3 3-3v2h3v-3h-2z" fill="#0838b0"/>
<path d="M1902 458l2-4 9-8 2 2-9 8z" fill="#e8a040" stroke="#805020" stroke-width=".6"/>
<rect x="1899" y="470" width="18" height="1" fill="#b0b0b0"/>
<text x="1907.500" y="491" class="i" style="font-size:10px;font-weight:bold;fill:#0a50c0">Fs</text>
<circle cx="1907.500" cy="509.500" r="4" fill="none" stroke="#40b040" stroke-width="2.500"/>
<rect x="1897" y="637" width="22" height="21" fill="#f8f8f8" stroke="#c0c0c0"/>
<text x="1907.500" y="536" class="i">1</text><text x="1907.500" y="559" class="i">5</text><text x="1907.500" y="582" class="i">15</text><text x="1907.500" y="605" class="i">30</text><text x="1907.500" y="627" class="i">60</text><text x="1908" y="653" class="i">日</text><text x="1908" y="675" class="i">周</text><text x="1908" y="698" class="i">月</text><text x="1907.500" y="720" class="i">N</text><text x="1908" y="744" class="i">多</text><text x="1908" y="768" class="i">季</text><text x="1908" y="790" class="i">年</text>
<rect x="1910" y="788" width="8" height="57" rx="4" fill="#606060"/>
<path d="M1911 825h6M1911 828h6M1911 831h6M1911 834h6M1911 837h6M1911 840h6" stroke="#30d030" stroke-width="1.200"/>

<!-- status bar -->
<rect x="0" y="1018" width="1895" height="1" fill="#d00000"/>
<rect x="0" y="1019" width="1895" height="21" fill="#f0f0f0"/>
<rect x="0" y="1040" width="1895" height="2" fill="#d8e6f0"/>
<text x="0" y="1035" style="font-size:12px;fill:#000">上证</text><text x="27" y="1034" class="rb">3328.63</text><text x="88" y="1034" class="rb">0.53</text><text x="125" y="1034" class="rb">0.02%</text><text x="170" y="1034" class="b">765.8亿</text>
<text x="220" y="1035" class="b">深证</text><text x="248" y="1034" class="gb">13540.1</text><text x="300" y="1034" class="gb">-63.77</text><text x="346" y="1034" class="gb">-0.47%</text><text x="390" y="1034" class="b">1621亿</text>
<text x="441" y="1035" class="b">中小</text><text x="467" y="1034" class="gb">9069.08</text><text x="521" y="1034" class="gb">-74.99</text><text x="566" y="1034" class="gb">-0.82%</text><text x="610" y="1034" class="b">465.5亿</text>
<text x="659" y="1035" class="b">沪深</text><text x="688" y="1034" class="rb">4798.25</text><text x="749" y="1034" class="rb">4.78</text><text x="786" y="1034" class="rb">0.10%</text><text x="829" y="1034" class="b">594.8亿</text>
<text x="880" y="1035" class="b">创业</text><text x="908" y="1034" class="gb">2724.69</text><text x="961" y="1034" class="gb">-15.89</text><text x="1005" y="1034" class="gb">-0.58%</text><text x="1050" y="1034" class="b">960.7亿</text>
<rect x="1100" y="1021" width="1" height="18" fill="#808080"/><rect x="1208" y="1021" width="1" height="18" fill="#808080"/>
<rect x="1103.500" y="1023.500" width="49" height="6" fill="#f8f8f8" stroke="#d0d0d0"/><rect x="1115" y="1024" width="12" height="6" fill="#f00"/><rect x="1128" y="1024" width="11" height="6" fill="#008000"/>
<rect x="1155.500" y="1023.500" width="50" height="6" fill="#f8f8f8" stroke="#d0d0d0"/><rect x="1168" y="1024" width="12" height="6" fill="#f00"/><rect x="1180" y="1024" width="11" height="6" fill="#008000"/>
<path d="M1107 1033h6M1107 1036h6M1122 1033h6M1122 1036h6M1130 1033h6M1130 1036h6M1138 1033h6M1138 1036h6M1146 1033h6M1146 1036h6" stroke="#008000" stroke-width="1.500"/><path d="M1118 1031l3 3h-2v3h-2v-3h-2z" fill="#008000"/>
<path d="M1159 1033h6M1159 1036h6M1174 1033h6M1174 1036h6M1182 1033h6M1182 1036h6M1190 1033h6M1190 1036h6M1198 1033h6M1198 1036h6" stroke="#f00" stroke-width="1.500"/><path d="M1170 1031l3 3h-2v3h-2v-3h-2z" fill="#f00"/>
<text x="1213" y="1035" style="font-size:13px;fill:#000">北京双线主站1</text>
<rect x="1812.500" y="1023.500" width="13" height="12" fill="#f8f8f8" stroke="#606060"/><path d="M1814 1026h10M1814 1029h10M1814 1032h10" stroke="#909090"/>
<circle cx="1837" cy="1029" r="6" fill="#d8d020" stroke="#606010"/><path d="M1837 1033v-7M1834.500 1028l2.500-2.500 2.500 2.500" stroke="#303000" fill="none"/>
<circle cx="1855" cy="1027" r="4.500" fill="#808080"/><path d="M1855 1030v5M1851 1036h8" stroke="#808080" stroke-width="2"/>
<path d="M1872 1023l3.500 4h-7z" fill="#f00"/><path d="M1872 1027l3.500 4h-7z" fill="#ff0"/><path d="M1872 1031l3.500 4h-7z" fill="#080"/>
<rect x="1885" y="1025" width="2" height="6" fill="#808080"/><rect x="1885" y="1033" width="2" height="2" fill="#808080"/>
</svg>
</body></html>
